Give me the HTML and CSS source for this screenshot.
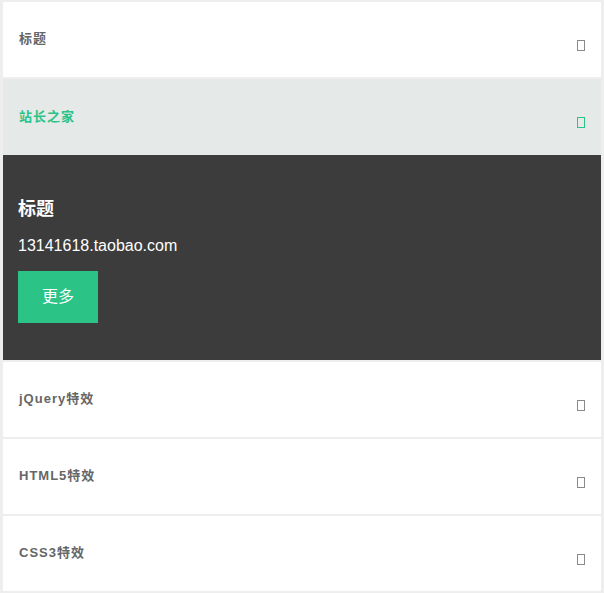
FILE: index.html
```html
<!DOCTYPE html>
<html lang="zh-CN">
<head>
  <meta charset="UTF-8" />
  <meta name="viewport" content="width=device-width, initial-scale=1.0" />
  <title>折叠菜单</title>
  <link rel="stylesheet" href="styles.css">
</head>
<body>
  <div class="accordion">
    <div class="item">
      <div class="head">标题<span class="arrow"></span></div>
    </div>
    <div class="item open">
      <div class="head">站长之家<span class="arrow"></span></div>
      <div class="content">
        <h2>标题</h2>
        <p>13141618.taobao.com</p>
        <a class="more" href="#">更多</a>
      </div>
    </div>
    <div class="item">
      <div class="head">jQuery特效<span class="arrow"></span></div>
    </div>
    <div class="item">
      <div class="head">HTML5特效<span class="arrow"></span></div>
    </div>
    <div class="item">
      <div class="head">CSS3特效<span class="arrow"></span></div>
    </div>
  </div>
</body>
</html>
```

FILE: styles.css
```css
body {
  margin: 0;
  background: #eeeeee;
  font-family: 'Liberation Sans', Arial, 'Noto Sans CJK SC', sans-serif;
}
.accordion {
  margin: 2px 3px 3px 3px;
  display: flex;
  flex-direction: column;
  gap: 2px;
}
.item {
  background: #ffffff;
}
.head {
  height: 71px;
  padding: 0 16px 4px;
  display: flex;
  align-items: center;
  justify-content: space-between;
  font-size: 13px;
  font-weight: bold;
  letter-spacing: 1px;
  color: #666666;
}
.arrow {
  width: 6px;
  height: 9px;
  border: 1px solid #8a8a8a;
  margin-top: 15px;
}
.open .head {
  height: 72px;
  background: #e5e9e8;
  color: #2bc386;
}
.open .arrow {
  border-color: #2bc386;
}
.content {
  background: #3c3c3c;
  color: #ffffff;
  padding: 41px 15px 37px;
}
.content h2 {
  margin: 0;
  font-size: 18px;
  line-height: 26px;
}
.content p {
  margin: 13px 0 14px;
  font-size: 16px;
  line-height: 22px;
}
.more {
  display: block;
  width: 80px;
  height: 52px;
  line-height: 52px;
  text-align: center;
  background: #2bc386;
  color: #ffffff;
  font-size: 16px;
  text-decoration: none;
}
```
